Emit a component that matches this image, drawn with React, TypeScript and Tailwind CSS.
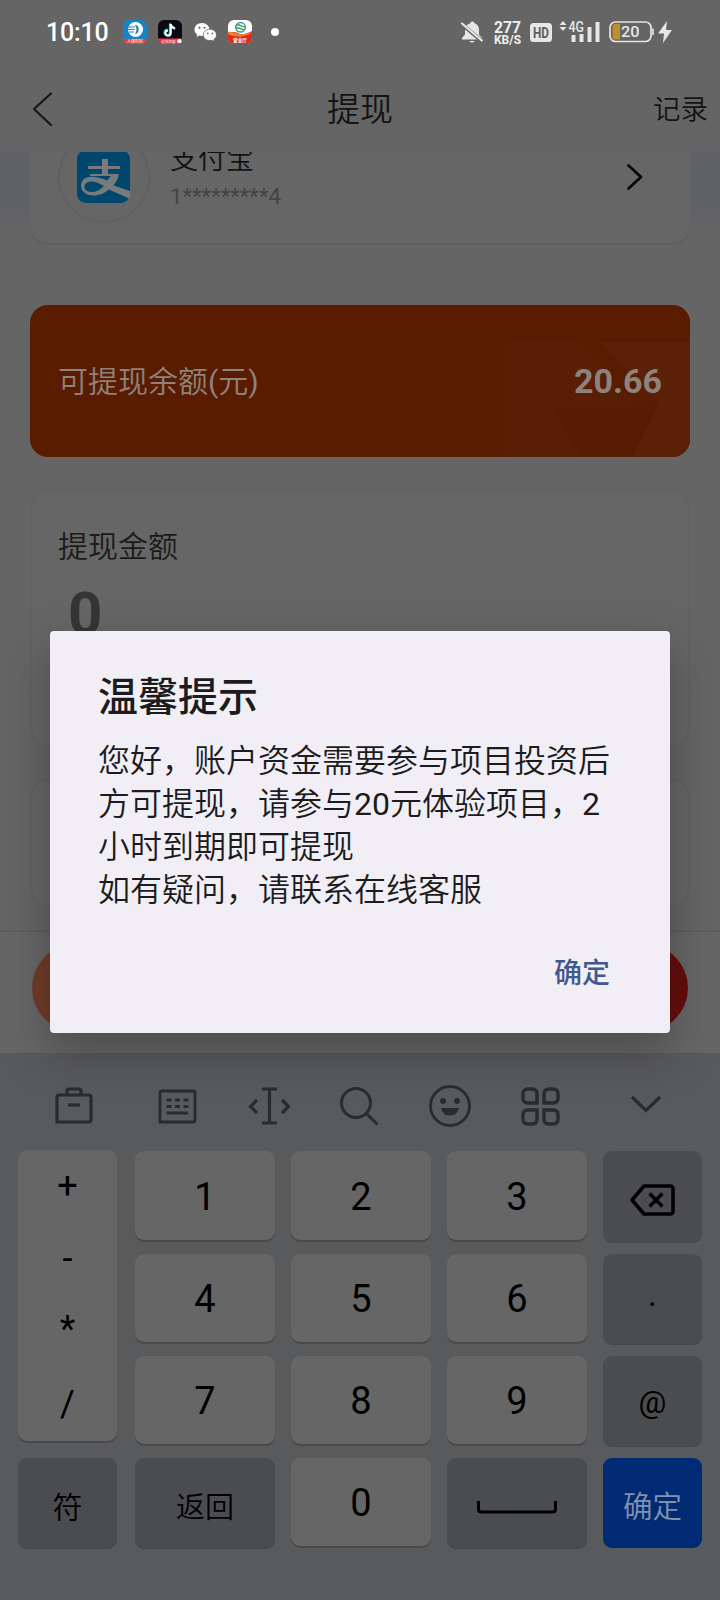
import type { ReactNode } from 'react';

const digitRows = [
  ['1', '2', '3'],
  ['4', '5', '6'],
  ['7', '8', '9'],
];

function Key({ children, tone = 'light', first = false }: { children: ReactNode; tone?: 'light' | 'dark' | 'blue'; first?: boolean }) {
  const tones = {
    light: 'mb-[2px] bg-[#666666] text-black shadow-[0_2px_0_#48494b] pt-[2px]',
    dark: 'bg-[#4b4c50] text-black shadow-[0_1px_0_#46474a]',
    blue: 'bg-[#002a73] text-[#8291ae]',
  };
  return <div className={`flex min-w-0 items-center justify-center rounded-[9px] ${tones[tone]} ${first ? 'mr-[2px]' : ''}`}>{children}</div>;
}

function StatusBar() {
  return (
    <div className="flex h-16 shrink-0 items-center pl-[46px] pr-[48px] text-[#efefef]">
      <span className="w-[63px] pt-[1px] text-[25px] font-medium leading-none tracking-[-0.2px] text-white">10:10</span>
      <svg className="ml-[14px] h-6 w-6" viewBox="0 0 24 24">
        <rect width="24" height="24" rx="6" fill="#1583c5" />
        <circle cx="12.500" cy="9.500" r="7.500" fill="#fff" />
        <path d="M12 5c5-1 5 9 0 9 2-3 2-6 0-9z" fill="#1583c5" />
        <path d="M5 7h7M4.500 9.500h7M6 12h5" stroke="#1583c5" strokeWidth="1" />
        <path d="M0 19h24c-.6 3-3 5-6 5H6c-3 0-5.400-2-6-5z" fill="#e8413c" />
        <text x="12" y="23" fontSize="4" fill="#fff" textAnchor="middle">人保财险</text>
      </svg>
      <svg className="ml-[11px] h-6 w-6" viewBox="0 0 24 24">
        <rect width="24" height="24" rx="6" fill="#0a0a12" />
        <path d="M12.300 4v9a2.700 2.700 0 1 1-2.700-2.700M12.300 4c.3 2.500 2 4 4.400 4.300" transform="translate(-.3 -.6)" fill="none" stroke="#35d8dc" strokeWidth="2.200" />
        <path d="M12.300 4v9a2.700 2.700 0 1 1-2.700-2.700M12.300 4c.3 2.500 2 4 4.400 4.300" transform="translate(.5 .1)" fill="none" stroke="#fff" strokeWidth="2" />
        <path d="M0 18.500h24c-.3 3.500-3 5.500-6 5.500H6c-3 0-5.700-2-6-5.500z" fill="#e93c50" />
        <text x="10.500" y="23" fontSize="3.600" fill="#fff" textAnchor="middle">过节优惠</text>
        <circle cx="21.500" cy="21.200" r="2.100" fill="#fff" />
      </svg>
      <svg className="ml-[12px] h-6 w-[23px]" viewBox="0 0 23 24">
        <path d="M8 3C3.800 3 .5 5.800.5 9.500c0 2.100 1 3.800 2.700 5L2.500 17l2.800-1.500c.9.300 1.800.4 2.700.4C12.200 15.900 15.500 13 15.500 9.500S12.200 3 8 3z" fill="#fff" />
        <path d="M16 9.200c-3.700 0-6.700 2.500-6.700 5.700s3 5.700 6.700 5.700c.8 0 1.600-.1 2.300-.3L20.600 21.500l-.6-2.200c1.600-1 2.500-2.600 2.500-4.400 0-3.200-3-5.700-6.500-5.700z" fill="#fff" stroke="#656565" strokeWidth=".8" />
        <g fill="#555"><circle cx="5.500" cy="7.800" r="1" /><circle cx="10.500" cy="7.800" r="1" /><circle cx="13.800" cy="13.400" r=".8" /><circle cx="18.300" cy="13.400" r=".8" /></g>
      </svg>
      <svg className="ml-[11px] h-6 w-6" viewBox="0 0 24 24">
        <rect width="24" height="24" rx="6" fill="#fff" />
        <path d="M0 14c4-3 8-2 12 0 4 1 8-1 12-3v7c0 4-3 6-6 6H6c-3 0-6-2-6-6z" fill="#dd2c1c" />
        <path d="M0 12c5-1 9 3 14 2 4 0 7-1 10-2-4 5-18 6-24 2z" fill="#f0842b" />
        <circle cx="12.500" cy="7.300" r="4.800" fill="none" stroke="#3d8fc6" strokeWidth="1.500" />
        <path d="M8 6c4-4 5 3 9 0M8 9c4-4 5 3 9 0" fill="none" stroke="#4aae55" strokeWidth="1.500" />
        <text x="12" y="22" fontSize="4.600" fontWeight="700" fill="#fff" textAnchor="middle">营业厅</text>
      </svg>
      <span className="ml-[19px] size-2 rounded-full bg-white" />

      <svg className="ml-auto h-6 w-6" viewBox="0 0 24 24">
        <path d="M12.500 1.500c-1.200 0-2 .7-2.200 1.700C6.800 4.200 5 6.800 5 10v4.500L2 18v1.500h20V18l-3-3.500V10c0-3.200-1.500-5.800-4.500-6.800-.2-1-.9-1.700-2-1.700z" fill="#e6e6e6" />
        <path d="M9.500 21h5c-.5 1-1.500 1.500-2.500 1.500S10 22 9.500 21z" fill="#e6e6e6" />
        <path d="M1 3.500 23 22" stroke="#656565" strokeWidth="3.800" />
        <path d="M2 3.500 21.800 20.500" stroke="#e6e6e6" strokeWidth="2.200" strokeLinecap="round" />
      </svg>
      <svg className="ml-[9px] mt-[2px] h-[26px] w-[29px]" viewBox="0 0 29 26" fill="#efefef" fontWeight="700">
        <text x="1" y="12.500" fontSize="16.500" textLength="27" lengthAdjust="spacingAndGlyphs">277</text>
        <text x="1" y="24" fontSize="13" textLength="27" lengthAdjust="spacingAndGlyphs">KB/S</text>
      </svg>
      <svg className="ml-[8px] h-[19px] w-[22px]" viewBox="0 0 22 19">
        <rect width="22" height="19" rx="3.500" fill="#e6e6e6" />
        <text x="3" y="14.800" fontSize="15" fontWeight="700" fill="#5c5c5c" textLength="16" lengthAdjust="spacingAndGlyphs">HD</text>
      </svg>
      <svg className="ml-[7px] h-[22px] w-[42px]" viewBox="0 0 42 22" fill="#e6e6e6">
        <path d="M4 0 7.500 4H.5zM4 10 .5 6h7z" />
        <path d="M12.500 14h4v7h-4zM20.500 13h4v8h-4zM28.500 6h4v15h-4zM36.500 1h4v20h-4z" />
        <text x="9.500" y="10.500" fontSize="14" fontWeight="500" textLength="15.500" lengthAdjust="spacingAndGlyphs">4G</text>
      </svg>
      <svg className="ml-[8px] h-[22px] w-[45px]" viewBox="0 0 45 22">
        <rect x="1" y="1" width="41" height="19.500" rx="5.500" fill="none" stroke="#e6e6e6" strokeWidth="1.700" />
        <path d="M6 3h5v15.500H6c-1.500 0-2.500-1-2.500-2.500V5.500C3.500 4 4.500 3 6 3z" fill="#be8f2f" />
        <path d="M44 7.500v6.500" stroke="#e6e6e6" strokeWidth="1.600" />
        <text x="12" y="16" fontSize="15.500" fontWeight="500" fill="#e6e6e6" textLength="18.500" lengthAdjust="spacingAndGlyphs">20</text>
      </svg>
      <svg className="ml-[4px] h-[22px] w-[14px]" viewBox="0 0 14 22"><path d="M9 0 0 12.500h6L5 22l9-13H8z" fill="#e6e6e6" /></svg>
    </div>
  );
}

function Header() {
  return (
    <div className="grid h-[88px] shrink-0 grid-cols-[160px_1fr_160px] items-center text-[#141414]">
      <svg className="ml-[32px] mt-[2px] h-[36px] w-[22px]" viewBox="0 0 22 36" fill="none" stroke="#171717" strokeWidth="2.200" strokeLinecap="round" strokeLinejoin="round"><path d="M19 2.500 2 18l17 16" /></svg>
      <h1 className="pt-[3px] text-center text-[33px] font-[350] leading-none">提现</h1>
      <span className="pr-[12px] pt-[3px] text-right text-[27.500px] font-[350] leading-none">记录</span>
    </div>
  );
}

function Account() {
  return (
    <section className="mx-[30px] flex h-[93px] shrink-0 overflow-hidden rounded-b-[18px] border-b-[2px] border-[#5e5e5e] bg-[#666666]">
      <div className="-mt-[21px] ml-[28px] flex size-[92px] shrink-0 items-center justify-center rounded-full border-2 border-[#616161]">
        <svg className="-ml-[2px] size-[54px]" viewBox="0 0 54 54">
          <rect x="1" width="53" height="53" rx="9" fill="#00476d" />
          <path d="M26 9h6v7h12v3H32v5h11c-1 5-3 8-5.500 11.500L54 41v8l-21-9.500C24 48 6 48 5 36c0-10 12-12 26-5.500 2-1.700 3-3.500 3.500-4.500H14v-2h12v-5H12v-3h14z" fill="#777b7e" />
          <path d="M28 36c-5-3-10-5-14-4.500C6 33 7 41 14 42c5 .5 10-2 14-6z" fill="#00476d" />
        </svg>
      </div>
      <div className="-mt-[10px] ml-[20px] flex flex-col">
        <span className="text-[28px] font-[350] leading-[35px] text-[#121212]">支付宝</span>
        <span className="mt-[6px] text-[22.200px] leading-[27px] text-[#444]">1*********4</span>
      </div>
      <svg className="ml-auto mr-[46px] mt-[11px] h-[28px] w-[18px]" viewBox="0 0 18 28" fill="none" stroke="#080808" strokeWidth="2.800" strokeLinecap="round" strokeLinejoin="round"><path d="M2.500 2.500 15 14 2.500 25.500" /></svg>
    </section>
  );
}

function Balance() {
  return (
    <section className="relative mx-[30px] mt-[60px] flex h-[152px] shrink-0 items-center justify-between overflow-hidden rounded-[18px] bg-[#591c00] px-[28px] text-[#8f827c]">
      <svg className="absolute inset-0 size-full" viewBox="0 0 660 152">
        <path d="M385 0h90v152H430z" fill="#591c01" />
        <path d="M475 0v152h185V0z" fill="#591f04" />
        <path d="M475 0h185v37H475z" fill="#591c00" />
        <path d="M570 37h90v115H600l28-50z" fill="#5a2008" />
        <path d="M522 103h84l22-4-26 53h-50z" fill="#561b01" />
        <path d="M550 37h20l58 62-20 4z" fill="#581c01" />
      </svg>
      <span className="relative pt-[2px] text-[30px] font-[350] leading-none">可提现余额<span className="font-normal">(</span>元<span className="font-normal">)</span></span>
      <span className="relative pb-[1px] text-[34px] font-bold leading-none">20.66</span>
    </section>
  );
}

function Toolbar() {
  return (
    <div className="flex h-[97px] shrink-0 items-center pl-[54px] pt-[8px]">
      <svg className="-mt-[2px] h-[40px] w-[40px]" viewBox="0 0 40 40" fill="none" stroke="#2a2b2d" strokeWidth="3.200"><path d="M5 10h30q2 0 2 2v23q0 2-2 2H3V12q0-2 2-2M13 10V6q0-2 2-2h10q2 0 2 2v4" /><path d="M14 20h12" /></svg>
      <svg className="ml-[63px] h-[40px] w-[40px]" viewBox="0 0 40 40" fill="none" stroke="#2a2b2d" strokeWidth="2.800"><path d="M3 36V7q0-2 2-2h31q2 0 2 2v27q0 2-2 2z" /><path d="M9.500 14h22M9.500 20.500h22" strokeWidth="3" strokeDasharray="5 3.500" /><path d="M9.500 27h21.500" strokeWidth="3" /></svg>
      <svg className="ml-[51px] h-[40px] w-[42px]" viewBox="0 0 42 40" fill="none" stroke="#2a2b2d" strokeWidth="3.200"><path d="M14 3h15M14 37h15M21.500 3v34M9 14l-6.500 6.500L9 27M34 14l6.500 6.500-6.500 6.500" /></svg>
      <svg className="ml-[49px] h-[42px] w-[40px]" viewBox="0 0 40 42" fill="none" stroke="#2a2b2d" strokeWidth="3"><circle cx="17" cy="18" r="14.500" /><path d="m27.500 28.500 11 11" /></svg>
      <svg className="ml-[49px] h-[44px] w-[44px]" viewBox="0 0 44 44" fill="none" stroke="#2a2b2d" strokeWidth="2.800"><circle cx="22" cy="22" r="19.500" /><circle cx="15" cy="17" r="3" fill="#2a2b2d" stroke="none" /><circle cx="29" cy="17" r="3" fill="#2a2b2d" stroke="none" /><path d="M13 24h18q-1.500 7.500-9 7.500T13 24z" fill="#2a2b2d" stroke="none" /></svg>
      <svg className="ml-[48px] h-[42px] w-[42px]" viewBox="0 0 42 42" fill="none" stroke="#2a2b2d" strokeWidth="3.400"><path d="M8 4h4q5 0 5 5v9H8q-5 0-5-5V9q0-5 5-5M29 4h4q5 0 5 5v4q0 5-5 5h-9V9q0-5 5-5M8 25h9v9q0 5-5 5H8q-5 0-5-5v-4q0-5 5-5M24 25h9q5 0 5 5v4q0 5-5 5h-4q-5 0-5-5z" /></svg>
      <svg className="-mt-[3px] ml-[68px] h-[20px] w-[32px]" viewBox="0 0 32 20" fill="none" stroke="#2a2b2d" strokeWidth="3.400"><path d="m2 3 14 13.500L30 3" /></svg>
    </div>
  );
}

function Keyboard() {
  return (
    <div className="flex h-[547px] shrink-0 flex-col bg-[#595a5c]">
      <Toolbar />
      <div className="grid grid-cols-[101px_140px_140px_140px_99px] grid-rows-[91px_90px_90px_90px] gap-x-4 gap-y-3 pl-[18px] pt-[1px]">
        <div className="row-span-3 -mt-[1px] mb-[5px] mr-[2px] flex flex-col items-center rounded-[9px] bg-[#666666] text-[36px] leading-none text-black shadow-[0_2px_0_#48494b]">
          <span className="mt-[18px] h-[36px]">+</span>
          <span className="mt-[37px] h-[36px]">-</span>
          <span className="mt-[34px] h-[36px]">*</span>
          <span className="mt-[39px] h-[36px]">/</span>
        </div>
        {digitRows.map((row, r) => [
          ...row.map((d) => <Key key={d}><span className="text-[38px] leading-none">{d}</span></Key>),
          <Key key={`side-${r}`} tone="dark">
            {r === 0 && <svg className="mt-[7px] h-[34px] w-[46px]" viewBox="0 0 46 34" fill="none" stroke="#000" strokeWidth="3.600" strokeLinejoin="round"><path d="M14 3h26q3 0 3 3v22q0 3-3 3H14L2 17z" /><path d="m19.500 10.500 13 13m0-13-13 13" strokeWidth="3.200" /></svg>}
            {r === 1 && <span className="-mt-[11px] text-[34px] leading-none">.</span>}
            {r === 2 && <span className="mt-[2px] text-[31px] leading-none">@</span>}
          </Key>,
        ])}
        <Key tone="dark" first><span className="mt-[10px] text-[30px] font-[350] leading-none">符</span></Key>
        <Key tone="dark"><span className="mt-[10px] text-[29px] font-[350] leading-none">返回</span></Key>
        <Key><span className="text-[38px] leading-none">0</span></Key>
        <Key tone="dark"><svg className="mt-[8px] h-[16px] w-[82px]" viewBox="0 0 82 16" fill="none" stroke="#000" strokeWidth="3"><path d="M2.500 2v8q0 3 3 3h71q3 0 3-3V2" /></svg></Key>
        <Key tone="blue"><span className="mt-[10px] text-[29.500px] font-[350] leading-none">确定</span></Key>
      </div>
    </div>
  );
}

export default function App() {
  return (
    <div className="relative flex h-[1600px] w-[720px] flex-col overflow-hidden bg-[#656565] font-['Roboto','Noto_Sans_CJK_SC',sans-serif]">
      <StatusBar />
      <Header />
      <main className="flex h-[778px] shrink-0 flex-col overflow-hidden bg-[linear-gradient(#606164_0px,#616265_56px,#656565_90px)]">
        <Account />
        <Balance />
        <section className="mx-[30px] mt-[32px] h-[259px] shrink-0 rounded-[20px] border-2 border-[#626262] bg-[#666666] pl-[26px] pt-[40px]">
          <p className="text-[30px] font-[350] leading-[32px] text-[#1b1b1b]">提现金额</p>
          <p className="mt-[19px] pl-[10px] text-[60px] font-bold leading-[64px] text-[#353535]">0</p>
        </section>
        <section className="mx-[30px] mt-[30px] h-[130px] shrink-0 rounded-[20px] border-2 border-[#626262] bg-[#666666]" />
      </main>
      <div className="h-[123px] shrink-0 border-t-2 border-[#5e5e5e] bg-[#666666] px-[32px] pt-[12px]">
        <div className="h-[88px] rounded-full bg-linear-to-r from-[#6f3c28] to-[#650c0c]" />
      </div>
      <Keyboard />

      <div className="absolute inset-0 flex flex-col px-[50px] pt-[631px]">
        <div role="dialog" className="flex h-[402px] flex-col rounded-[4px] bg-[#f1eff5] px-[48px] shadow-[0_18px_48px_2px_rgba(0,0,0,0.26)]">
          <h2 className="mt-[45px] text-[40px] font-medium leading-[44px] text-[#1b1b20]">温馨提示</h2>
          <p className="mt-[20px] whitespace-nowrap text-[32px] font-[350] leading-[43px] text-[#1b1b20]">
            您好，账户资金需要参与项目投资后<br />方可提现，请参与<span className="font-normal">20</span>元体验项目，<span className="font-normal">2</span><br />小时到期即可提现<br />如有疑问，请联系在线客服
          </p>
          <button className="mr-[12px] mt-[46px] self-end text-[28px] font-medium leading-[32px] text-[#42598f]">确定</button>
        </div>
      </div>
    </div>
  );
}
